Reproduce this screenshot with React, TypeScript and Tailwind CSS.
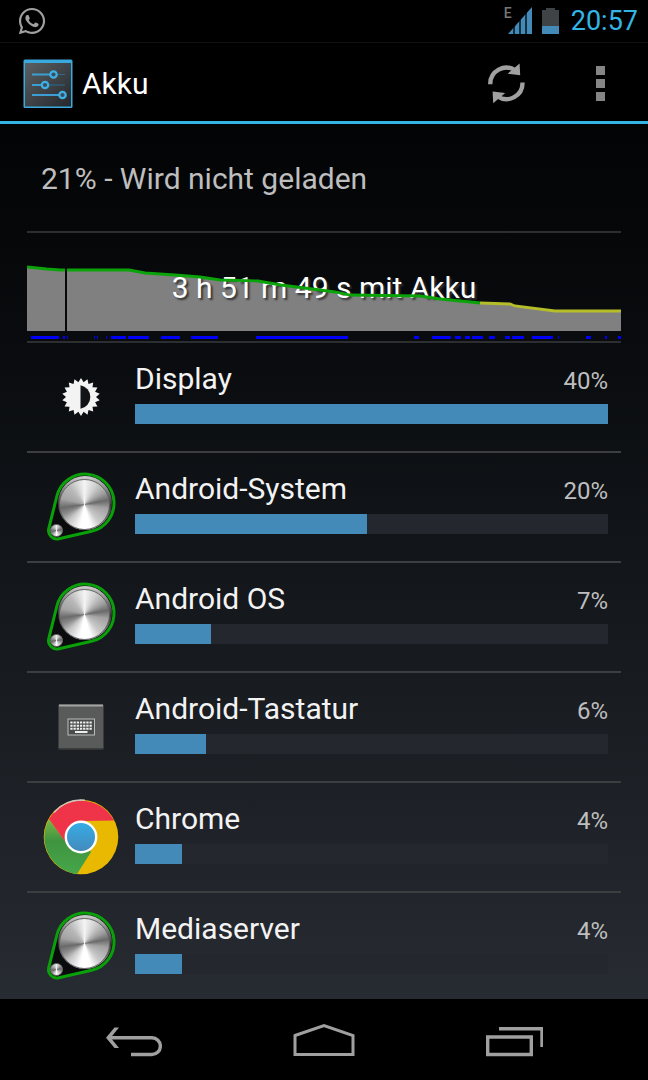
import type { ReactNode } from "react";
import { FaWhatsapp } from "react-icons/fa";

type UsageItem = {
    name: string;
    percent: string;
    bar: number;
    icon: ReactNode;
};

const SettingsIcon = () => (
    <svg viewBox="0 0 50 50" className="size-[50px]" aria-hidden="true">
        <defs>
            <linearGradient id="panel" x1="0" y1="0" x2="1" y2="1">
                <stop offset="0" stopColor="#5b6063" />
                <stop offset="1" stopColor="#24282c" />
            </linearGradient>
        </defs>
        <rect x="0.5" y="0.5" width="49" height="48.5" rx="1.5" fill="#3aa9dd" />
        <rect x="2" y="4" width="46" height="43.5" fill="url(#panel)" />
        <g stroke="#3c9ed2" strokeWidth="2">
            <path d="M9 15.5h19M9 26h10M9 36h28" />
            <path d="M34 15.5h8M26 26h16" stroke="#2b6a8d" strokeWidth="1.2" />
        </g>
        <g fill="#36505f" stroke="#3fb0e6" strokeWidth="2.2">
            <circle cx="30.5" cy="15.5" r="3.2" />
            <circle cx="22" cy="26" r="3.2" />
            <circle cx="39.5" cy="36" r="3.2" />
        </g>
    </svg>
);

const RefreshIcon = () => (
    <svg viewBox="0 0 38 41" className="h-[41px] w-[38px]" aria-hidden="true">
        <g id="arrow">
            <path
                d="M2.3 21.3A16.1 16.1 0 0 1 27.5 7.5"
                fill="none"
                stroke="#a0a0a0"
                strokeWidth="4.4"
            />
            <path d="M31.6 0.6L32.2 12.3L19.6 10.7Z" fill="#a0a0a0" />
        </g>
        <use href="#arrow" transform="rotate(180 18.4 20.4)" />
    </svg>
);

const BrightnessIcon = () => {
    const points = Array.from({ length: 36 }, (_, i) => {
        const r = i % 2 === 0 ? 19 : 15;
        const a = (i * Math.PI) / 18 - Math.PI / 2;
        return `${20 + r * Math.cos(a)},${20 + r * Math.sin(a)}`;
    }).join(" ");
    return (
        <svg viewBox="0 0 40 40" className="size-10" aria-hidden="true">
            <polygon points={points} fill="#f3f3f3" />
            <path d="M19.5 8.2A12 12 0 0 1 19.5 31.8Z" fill="#111316" />
        </svg>
    );
};

const KnobIcon = () => (
    <div className="relative size-20">
        <svg viewBox="0 0 80 80" className="size-20" aria-hidden="true">
            <defs>
                <linearGradient id="rim" x1="0" y1="0" x2="0" y2="1">
                    <stop offset="0" stopColor="#d0d0d0" />
                    <stop offset="0.3" stopColor="#777" />
                    <stop offset="0.55" stopColor="#333" />
                    <stop offset="1" stopColor="#aaa" />
                </linearGradient>
            </defs>
            <path
                d="M15.9 29A29 29 0 1 1 50.5 64.3L17.9 71.8A8.5 8.5 0 0 1 7.8 61.4Z"
                fill="#0a0b0c"
                stroke="#0aa00a"
                strokeWidth="3"
            />
            <circle cx="44" cy="36" r="27" fill="url(#rim)" />
        </svg>
        <div className="absolute left-[18px] top-[12px] size-[51px] rounded-full border border-[#666] bg-[conic-gradient(#f4f4f4,#cfcfcf_30deg,#9d9d9d_60deg,#6a6a6a_80deg,#a2a2a2_100deg,#c9c9c9_140deg,#fff_165deg,#fff_190deg,#c4c4c4_225deg,#8a8a8a_245deg,#6a6a6a_262deg,#a4a4a4_285deg,#b9b9b9_320deg,#f4f4f4)]" />
        <div className="absolute left-[9px] top-[57px] size-[13px] rounded-full border border-[#777] bg-[conic-gradient(#eee,#666_80deg,#aaa_120deg,#fff_180deg,#666_260deg,#eee)]" />
    </div>
);

const KeyboardIcon = () => (
    <svg viewBox="0 0 46 46" className="size-[46px]" aria-hidden="true">
        <rect x="0.5" y="0.5" width="45" height="45" rx="1" fill="#595b5b" />
        <path d="M1 1.5h44" stroke="#a3a5a5" strokeWidth="2" />
        <path d="M1 45h44" stroke="#333" strokeWidth="1.5" />
        <rect x="10" y="15" width="26.5" height="16" fill="#4a4c4c" stroke="#bbb" />
        <g stroke="#eee" strokeWidth="2" strokeDasharray="2.3 0.9">
            <path d="M12.3 18.6h22M12.3 21.7h22M12.3 24.8h22" />
        </g>
        <path d="M17 28h12.5" stroke="#eee" strokeWidth="2" />
    </svg>
);

const ChromeIcon = () => (
    <svg viewBox="0 0 76 76" className="size-[76px]" aria-hidden="true">
        <defs>
            <linearGradient id="green" x1="0" y1="0" x2="0" y2="1">
                <stop offset="0" stopColor="#7db548" />
                <stop offset="0.4" stopColor="#3f9440" />
                <stop offset="1" stopColor="#46a64a" />
            </linearGradient>
            <linearGradient id="blue" x1="0" y1="0" x2="0" y2="1">
                <stop offset="0" stopColor="#35aee6" />
                <stop offset="1" stopColor="#4488bb" />
            </linearGradient>
        </defs>
        <circle cx="38" cy="38" r="37.3" fill="#e8b900" />
        <path d="M6 20A37.3 37.3 0 0 0 34 75L48 53L38 38L22 42Z" fill="url(#green)" />
        <path d="M6 20A37.3 37.3 0 0 1 71 21.5L38 22L22.5 43Z" fill="#ef3349" />
        <path d="M11 13.5A37 37 0 0 1 42 1.2" fill="none" stroke="#cfc4c4" strokeWidth="1.4" />
        <circle cx="38" cy="38" r="15.2" fill="url(#blue)" stroke="#fff" strokeWidth="2.4" />
    </svg>
);

const items: UsageItem[] = [
    { name: "Display", percent: "40%", bar: 100, icon: <BrightnessIcon /> },
    { name: "Android-System", percent: "20%", bar: 49, icon: <KnobIcon /> },
    { name: "Android OS", percent: "7%", bar: 16, icon: <KnobIcon /> },
    { name: "Android-Tastatur", percent: "6%", bar: 15, icon: <KeyboardIcon /> },
    { name: "Chrome", percent: "4%", bar: 10, icon: <ChromeIcon /> },
    { name: "Mediaserver", percent: "4%", bar: 10, icon: <KnobIcon /> },
];

// [start, width] of each awake period along the chart
const awake = [
    [4, 28], [36, 2], [40, 1], [67, 1], [70, 1], [79, 1], [84, 15], [101, 21],
    [134, 19], [164, 27], [229, 92], [387, 5], [405, 19], [428, 6], [438, 5],
    [445, 11], [462, 6], [478, 5], [485, 12], [505, 21], [531, 1], [559, 5],
    [578, 2], [591, 3],
];

const BatteryChart = () => (
    <section className="relative mx-[27px] h-[110px] border-b-2 border-[#2c2e31]">
        <svg
            viewBox="0 0 594 108"
            preserveAspectRatio="none"
            className="absolute inset-0 h-[108px] w-full"
            aria-hidden="true"
        >
            <path
                d="M0 34L20 36L33 37H102L118 40L148 42L173 44L193 47L231 48L254 52L293 57L308 59L323 62L393 63L413 66L453 70L483 71L488 73L528 78H594V98H0Z"
                fill="#808080"
            />
            <path d="M39 34V98" stroke="#08090b" strokeWidth="2" />
            {awake.map(([x, w]) => (
                <rect key={x} x={x} y="103" width={w} height="3" fill="#0000fa" />
            ))}
        </svg>
        <p className="absolute inset-x-0 top-[37px] text-center text-[30px] leading-9 text-white [text-shadow:2px_2px_2px_#333]">
            3 h 51 m 49 s mit Akku
        </p>
        <svg
            viewBox="0 0 594 108"
            preserveAspectRatio="none"
            className="absolute inset-0 h-[108px] w-full"
            fill="none"
            strokeWidth="2.8"
            aria-hidden="true"
        >
            <path
                d="M0 34L20 36L33 37H38M40 37H102L118 40L148 42L173 44L193 47L231 48L254 52L293 57L308 59L323 62L393 63L413 66L453 70"
                stroke="#0aa30a"
            />
            <path d="M453 70L483 71L488 73L528 78H594" stroke="#b5bd28" />
        </svg>
    </section>
);

const UsageRow = ({ item }: { item: UsageItem }) => (
    <li className="flex h-[110px] gap-[14px] border-b-2 border-[#3c3e42] pl-[14px] pr-[13px] last:h-auto last:flex-1 last:border-b-0">
        <div className="flex w-20 shrink-0 items-center justify-center">{item.icon}</div>
        <div className="flex-1 pb-4 pt-[18px]">
            <div className="flex items-baseline justify-between leading-9">
                <span className="text-[30px] text-[#f3f3f3]">{item.name}</span>
                <span className="text-2xl leading-9 text-[#bebebe]">{item.percent}</span>
            </div>
            <div
                role="progressbar"
                aria-label={item.name}
                aria-valuenow={item.bar}
                className="mt-[5px] h-5 bg-[#24272e]"
            >
                <div className="h-full bg-[#448ab8]" style={{ width: `${item.bar}%` }} />
            </div>
        </div>
    </li>
);

const StatusBar = () => (
    <div className="flex h-[43px] items-center justify-between border-b border-[#111] bg-black pl-[17px] pr-[10px]">
        <FaWhatsapp className="size-[30px] text-[#a0a0a0]" />
        <div className="flex items-start">
            <div className="flex gap-[10px]">
                <div className="flex">
                    <span className="h-3 text-sm font-medium leading-3 text-[#777]">E</span>
                    <svg viewBox="0 0 24 28" className="-ml-1 h-7 w-6" aria-hidden="true">
                        <path d="M0 27L24 0V27Z" fill="#448ab8" />
                        <path d="M6 0V28M12 0V28M18 0V28" stroke="#000" strokeWidth="1.3" />
                    </svg>
                </div>
                <svg viewBox="0 0 17 28" className="h-7 w-[17px]" aria-hidden="true">
                    <path d="M0 3H4V1H13V3H17V27H0Z" fill="#404345" />
                    <path d="M0 19H17V27H0Z" fill="#448ab8" />
                </svg>
            </div>
            <time className="ml-3 text-[27px] leading-7 text-[#33b5e5]">20:57</time>
        </div>
    </div>
);

const NavBar = () => (
    <nav className="grid h-[81px] grid-cols-3 bg-black px-[39px]">
        <button aria-label="Zurück" className="flex items-center justify-center">
            <svg viewBox="0 0 56 34" className="h-[34px] w-14" fill="none" stroke="#a0a0a0" strokeWidth="3.4">
                <path d="M25 31.5H46A8.3 8.3 0 0 0 46 14.8H3" />
                <path d="M0 14.8L8.5 4.5H13L4.7 14.8L13 25H8.5Z" fill="#a0a0a0" stroke="none" />
            </svg>
        </button>
        <button aria-label="Startseite" className="flex items-center justify-center">
            <svg viewBox="0 0 62 34" className="h-[34px] w-[62px]" fill="none" stroke="#a0a0a0" strokeWidth="3">
                <path d="M2 12.5L31 2.5L60 12.5V31.5H2Z" />
            </svg>
        </button>
        <button aria-label="Letzte Apps" className="flex items-center justify-center">
            <svg viewBox="0 0 58 34" className="h-[34px] w-[58px]" fill="none" stroke="#a0a0a0" strokeWidth="3.4">
                <path d="M2.7 14H46.3V31.5H2.7Z" />
                <path d="M14 5.7H57V24" />
            </svg>
        </button>
    </nav>
);

const App = () => {
    return (
        <div className="flex min-h-screen flex-col bg-black font-[Roboto,sans-serif]">
            <StatusBar />
            <header className="flex h-[81px] items-center border-b-3 border-[#33b5e5] bg-black pl-[23px] pr-[43px] pt-[3px]">
                <SettingsIcon />
                <h1 className="ml-[9px] flex-1 text-[30px] leading-9 text-white">Akku</h1>
                <button aria-label="Aktualisieren">
                    <RefreshIcon />
                </button>
                <button aria-label="Weitere Optionen" className="ml-[70px] grid gap-1">
                    <span className="size-[9px] bg-[#858585]" />
                    <span className="size-[9px] bg-[#858585]" />
                    <span className="size-[9px] bg-[#858585]" />
                </button>
            </header>
            <main className="flex flex-1 flex-col bg-linear-to-b from-[#030405] to-[#272b32]">
                <div className="mx-[27px] flex h-[109px] items-center border-b-2 border-[#2c2e31] pl-[14px] pt-[2px]">
                    <p className="text-[30px] leading-9 text-[#bebebe]">21% - Wird nicht geladen</p>
                </div>
                <BatteryChart />
                <ul className="mx-[27px] flex flex-1 flex-col">
                    {items.map((item) => (
                        <UsageRow key={item.name} item={item} />
                    ))}
                </ul>
            </main>
            <NavBar />
        </div>
    );
};

export default App;
